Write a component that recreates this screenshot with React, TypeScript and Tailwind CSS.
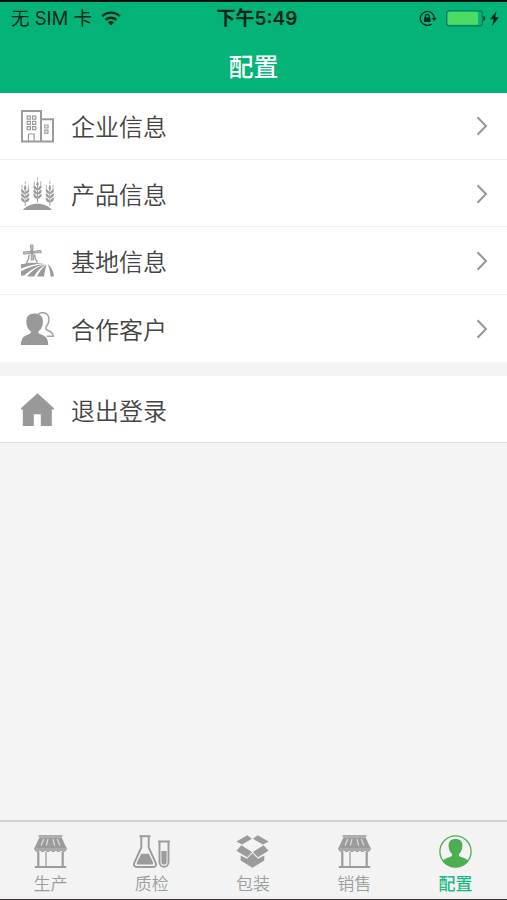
import type { ReactNode } from 'react'

const CompanyIcon = () => (
  <svg viewBox="0 0 33 33" className="h-[33px] w-[33px]" fill="none" stroke="#9b9b9b">
    <path d="M1 1h19v30.400H1zM20 9.300h12v22.100H20" strokeWidth="2" />
    <path d="M7.500 31V24h5.600v7" strokeWidth="1.2" />
    <g strokeWidth="1.2">
      <path d="M6.200 6.200h3.200v3H6.200zM11.600 6.200h3.200v3h-3.200zM6.200 11.400h3.200v3H6.200zM11.600 11.400h3.200v3h-3.200zM6.200 16.600h3.200v3H6.200zM11.600 16.600h3.200v3h-3.200z" />
      <path d="M23.800 15h3.200v3h-3.200zM23.800 20.200h3.200v3h-3.200z" />
    </g>
  </svg>
)

const Wheat = ({ x, y }: { x: number; y: number }) => (
  <g transform={`translate(${x} ${y})`}>
    <path d="M0 4v21" stroke="#9b9b9b" strokeWidth="0.9" />
    <path d="M0 0v3M-3.2 4v4M3.2 4v4" stroke="#b0b0b0" strokeWidth="0.9" />
    {[9, 13.2, 17.4].map((top) => (
      <path
        key={top}
        d={`M0 ${top + 4}C-3.8 ${top + 3.8} -4.4 ${top + 1} -4 ${top - 1}C-1.6 ${top} -.4 ${top + 1.6} 0 ${top + 4}C.4 ${top + 1.6} 1.6 ${top} 4 ${top - 1}C4.4 ${top + 1} 3.8 ${top + 3.8} 0 ${top + 4}z`}
        fill="#9b9b9b"
      />
    ))}
    <path d="M0 4.5c-1.8 1.5-1.5 3.5 0 5 1.5-1.5 1.8-3.5 0-5z" fill="#9b9b9b" />
  </g>
)

const ProductIcon = () => (
  <svg viewBox="0 0 33 33" className="h-[33px] w-[33px]">
    <Wheat x={4.2} y={4} />
    <Wheat x={16.5} y={0.3} />
    <Wheat x={28.8} y={4} />
    <path d="M2 33c3-3.8 8.5-6.2 14.5-6.2S28 29.2 31 33z" fill="#9b9b9b" />
  </svg>
)

const BaseIcon = () => (
  <svg viewBox="0 0 33 33" className="h-[33px] w-[33px]">
    <path
      d="M9.400 1h2.600l-.3 6H10zM12 7.600l7.700-1.300.5 2.400-8 .3zM9.500 9l-6.700 1.300-.4-2.400 7-.3zM10.300 10.500h1.800l.5 5.500h-2.500z"
      fill="#c4c4c4"
      stroke="#9b9b9b"
    />
    <circle cx="10.800" cy="8.400" r="2" fill="#9b9b9b" />
    <path d="M8.200 10.500c-.2 3-1 5.800-2.700 8.500M13.500 10.500c.2 3 1 5.500 2.800 7.900" fill="none" stroke="#9b9b9b" strokeWidth="1.4" />
    <g fill="#9b9b9b">
      <path d="M0 20.300c7-2 16-1.900 23.500-1.200C15 20 7 21.700 0 24.600z" />
      <path d="M0 27.200c7.500-4.200 16-6.600 24-7.200C16.500 22 8.500 26 3.500 31.500H0z" />
      <path d="M6 32.600c4.500-5.800 11-10.200 18.500-12C20 23.500 15.500 28 13 32.600z" />
      <path d="M16 32.600c2.300-4.600 5.600-9.200 9.500-12-.8 3.700-2 8-2.500 12z" />
      <path d="M26.700 20.300c3.200 2.200 5.900 6.900 6.300 12.300h-3.400c-.3-4.400-1.300-8.600-2.900-12.300z" />
    </g>
  </svg>
)

const CustomerIcon = () => (
  <svg viewBox="0 0 33 33" className="h-[33px] w-[33px]">
    <path
      d="M17.500 2c1-1 2.700-1.300 4.500-1.300 4 0 6.100 2.800 5.900 7.300-.1 3.300-1.300 5-2.800 7.100-.5 1.800.3 3 2.200 3.700 3.400 1.200 5 2.800 5 5.500h-6.500"
      fill="none"
      stroke="#a3a3a3"
      strokeWidth="1.5"
    />
    <path
      d="M13.600 1.400c-5.700 0-8.400 3-8.200 8 .1 4.600 1.300 7.600 4.300 9.800.5 1.700-.3 2.700-2.600 3.400C2.500 24.200 0 26.500 0 33h27.300c0-6.500-2.600-8.800-7.200-10.400-2.300-.7-3-1.700-2.500-3.400 3-2.200 4.200-5.200 4.300-9.800.2-5-2.600-8-8.300-8z"
      fill="#999"
    />
  </svg>
)

const HomeIcon = () => (
  <svg viewBox="0 0 33 33" className="h-[33px] w-[33px]" fill="#999">
    <path d="M16.500.3L0 15.200v1.300h1.800V33h11V21.300h7V33h11V16.500H33v-1.300z" />
  </svg>
)

const ChevronIcon = () => (
  <svg viewBox="0 0 12 20" className="h-5 w-3" fill="none" stroke="#979797" strokeWidth="2">
    <path d="M1.500 1.200L10 10l-8.500 8.800" />
  </svg>
)

const ShopIcon = () => (
  <svg viewBox="0 0 33 33" className="h-[33px] w-[33px]" fill="none" stroke="#9b9b9b">
    <path d="M4.500 1h24" strokeWidth="1.6" />
    <path d="M5.500 2.300h22L32 12H1z" fill="#9b9b9b" stroke="none" />
    <path d="M9.800 4L7 10.500M14 4l-1.600 6.500M19 4l1.600 6.500M23.200 4l2.800 6.500" stroke="#dedede" strokeWidth="1.2" />
    <path
      d="M.8 12.500h31.400v2.300c-1 2.400-4.200 2.400-5.200 0-1 2.400-4.200 2.400-5.200 0-1 2.400-4.200 2.400-5.300 0-1 2.400-4.200 2.400-5.200 0-1 2.400-4.200 2.400-5.200 0-1 2.400-4.300 2.400-5.300 0z"
      fill="#ababab"
    />
    <path d="M4.300 17v14.500M28.700 17v14.500" strokeWidth="2.2" />
    <path d="M12 17v14.500" strokeWidth="1.3" />
    <path d="M.8 32h31.400" strokeWidth="1.8" />
  </svg>
)

const FlaskIcon = () => (
  <svg viewBox="0 0 37 33" className="h-[33px] w-[37px]" fill="none" stroke="#9b9b9b">
    <path d="M6.500 1.200h11" strokeWidth="2" />
    <path d="M8.300 2v10.500L1.300 27.800c-1 2.500 0 4.200 2.500 4.200h16.400c2.500 0 3.500-1.700 2.500-4.200L15.700 12.500V2" strokeWidth="1.9" />
    <path d="M8.200 18.800h7.600l4.400 9c.4 1 0 1.600-1 1.600H4.800c-1 0-1.400-.6-1-1.600z" fill="#9b9b9b" stroke="none" />
    <path d="M25 6.500h12" strokeWidth="2" />
    <path d="M26.500 7v20c0 6.500 9 6.500 9 0V7" strokeWidth="1.9" />
    <path d="M28.400 16h5.200v11c0 3.600-5.200 3.600-5.200 0z" fill="#9b9b9b" stroke="none" />
  </svg>
)

const BoxIcon = () => (
  <svg viewBox="0 0 33 33" className="h-[33px] w-[33px]" fill="#9b9b9b">
    <path d="M11.300.3l4.700 3.500-10 5.800L.4 6.500zM21.700.3L17 3.800l10 5.800 5.600-3.100z" />
    <path d="M5.400 10.300l10.700 6.600-4.900 5.300L.4 15.700zM27.600 10.300l-10.700 6.600 4.900 5.300 10.800-6.500z" />
    <path d="M16.500 18.200l5.500 5.600 6.300-3.300v5L16.500 32.700 4.700 25.500v-5l6.300 3.300z" />
  </svg>
)

const ProfileIcon = () => (
  <svg viewBox="0 0 33 33" className="h-[33px] w-[33px]">
    <circle cx="16.5" cy="16.5" r="15.6" fill="none" stroke="#4caf50" strokeWidth="1.3" />
    <path
      d="M16.500 4c-4.800 0-7 2.400-6.900 6.800.1 3.800 1.100 6.300 3.500 8.200.4 1.500-.2 2.400-2.100 3-3.700 1.100-6 2.200-7.400 4.100C6.500 30.300 11.500 32.300 16.500 32.300s10-2 12.900-6.200c-1.400-1.900-3.700-3-7.400-4.100-1.900-.6-2.500-1.500-2.100-3 2.400-1.900 3.400-4.400 3.500-8.200C23.500 6.400 21.300 4 16.500 4z"
      fill="#4caf50"
    />
  </svg>
)

const WifiIcon = () => (
  <svg viewBox="0 0 20 15" className="h-[15px] w-5" fill="none" stroke="#06251b" strokeWidth="2.3">
    <path d="M1.200 5.200c5-4.700 12.600-4.700 17.600 0M4.600 8.900c3.100-2.900 7.700-2.900 10.800 0" />
    <path d="M6.900 11.300c1.800-1.600 4.400-1.600 6.200 0L10 14.500z" fill="#06251b" stroke="none" />
  </svg>
)

const LockIcon = () => (
  <svg viewBox="0 0 18 17" className="h-[17px] w-[18px]" fill="none" stroke="#06251b">
    <path d="M15.300 8.500A7 7 0 1 0 12.500 14" strokeWidth="1.3" />
    <path d="M12.600 8h5.200l-2.600 3z" fill="#06251b" stroke="none" />
    <path d="M5.200 7.500h6.200V12H5.200z" fill="#06251b" stroke="none" />
    <path d="M6.400 8V6.200c0-2.500 3.800-2.500 3.800 0V8" strokeWidth="1.2" />
  </svg>
)

const BatteryIcon = () => (
  <svg viewBox="0 0 40 17" className="h-[17px] w-10">
    <rect x=".6" y=".8" width="35.8" height="15" rx="2.5" fill="none" stroke="#087c55" strokeWidth="1.2" />
    <rect x="1.6" y="1.8" width="30.5" height="13" rx="1.5" fill="#4cdb63" />
    <path d="M37.400 6c2.400.6 2.400 4.200 0 4.800z" fill="#06251b" />
  </svg>
)

const BoltIcon = () => (
  <svg viewBox="0 0 9 15" className="h-[15px] w-[9px]" fill="#06251b">
    <path d="M6.500 0L0 8.300h3.700L2 15l7-8.800H5.200z" />
  </svg>
)

const menu = [
  { label: '企业信息', icon: <CompanyIcon /> },
  { label: '产品信息', icon: <ProductIcon /> },
  { label: '基地信息', icon: <BaseIcon /> },
  { label: '合作客户', icon: <CustomerIcon /> },
]

const tabs = [
  { label: '生产', icon: <ShopIcon /> },
  { label: '质检', icon: <FlaskIcon /> },
  { label: '包装', icon: <BoxIcon /> },
  { label: '销售', icon: <ShopIcon /> },
  { label: '配置', icon: <ProfileIcon />, active: true },
]

function MenuRow({ icon, label, arrow }: { icon: ReactNode; label: string; arrow?: boolean }) {
  return (
    <button className="flex h-full w-full items-center pt-px pr-[19px] pl-[21px] text-left">
      {icon}
      <span className="ml-[17px] flex-1 pt-1 text-[24px] leading-none font-[350] text-[#444]">{label}</span>
      {arrow && <ChevronIcon />}
    </button>
  )
}

export default function App() {
  return (
    <div className="flex h-[900px] w-full flex-col overflow-hidden border-y border-t-2 border-t-[#03140e] border-b-[#383438] bg-[#f4f4f4] font-['Inter','Noto_Sans_CJK_SC',sans-serif]">
      <header className="h-[90.5px] shrink-0 bg-[#03b378]">
        <div className="grid h-[33px] grid-cols-3 items-center pr-2 pl-[11px] text-[#06251b]">
          <div className="flex items-center gap-[9px] text-[18.5px] leading-none whitespace-nowrap">
            <span>无 SIM 卡</span>
            <WifiIcon />
          </div>
          <div className="pl-1 text-center text-[19px] leading-none font-semibold">下午5:49</div>
          <div className="flex items-center justify-end">
            <LockIcon />
            <span className="ml-[9px] flex"><BatteryIcon /></span>
            <span className="ml-1 flex"><BoltIcon /></span>
          </div>
        </div>
        <h1 className="mt-5 text-center text-[25px] leading-none font-medium text-white">配置</h1>
      </header>

      <main className="flex-1">
        <ul className="bg-white">
          {menu.map((item) => (
            <li key={item.label} className="h-[67.4px] border-b border-[#f0f0f0] last:border-b-0">
              <MenuRow icon={item.icon} label={item.label} arrow />
            </li>
          ))}
        </ul>
        <div className="mt-[14px] h-[67px] border-b border-[#dedede] bg-white">
          <MenuRow icon={<HomeIcon />} label="退出登录" />
        </div>
      </main>

      <nav className="grid h-[79px] shrink-0 grid-cols-5 border-t-2 border-[#d2d2d2] bg-[#f3f3f3] pr-px">
        {tabs.map((tab) => (
          <button key={tab.label} className="flex flex-col items-center pt-[13px]">
            {tab.icon}
            <span
              className={
                tab.active
                  ? 'mt-2 text-[17px] leading-none font-medium text-[#1cba86]'
                  : 'mt-2 text-[17px] leading-none font-[350] text-[#999ea0]'
              }
            >
              {tab.label}
            </span>
          </button>
        ))}
      </nav>
    </div>
  )
}
